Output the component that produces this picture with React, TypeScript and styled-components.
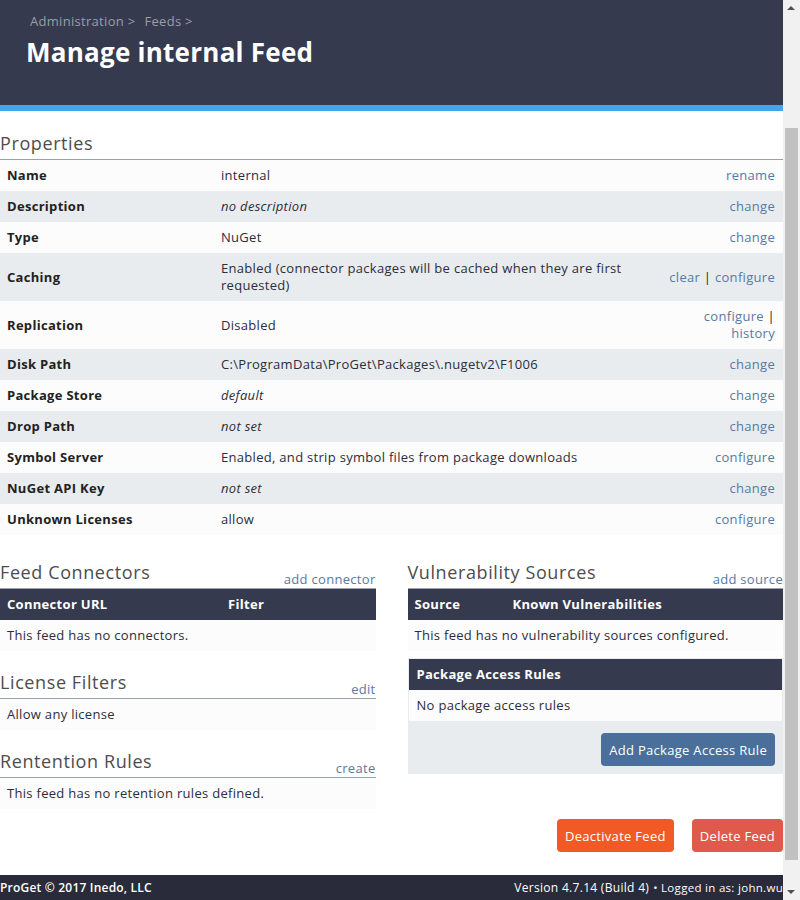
import React from 'react'
import styled, { createGlobalStyle } from 'styled-components'

const GlobalStyle = createGlobalStyle`
  body {
    margin: 0;
    background: #fff;
    color: #222;
    font-family: "Open Sans", "Liberation Sans", sans-serif;
    font-size: 13px;
    letter-spacing: 0.3px;
  }
  * {
    box-sizing: border-box;
  }
`

const Page = styled.div`
  width: calc(100% - 17px);
  min-height: 100vh;
  display: flex;
  flex-direction: column;
`

const Header = styled.header`
  height: 111px;
  padding: 13px 26px 0;
  background: #363a4e;
  border-bottom: 6px solid #42a6ef;
`

const Breadcrumb = styled.div`
  display: flex;
  gap: 9px;
  padding-left: 4px;
  font-size: 13px;
  line-height: 16px;
  color: #9a9eac;
`

const Title = styled.h1`
  margin: 7px 0 0;
  font-size: 26px;
  line-height: 32px;
  font-weight: 700;
  letter-spacing: 0.25px;
  color: #fff;
`

const Main = styled.main`
  flex: 1;
  padding: 20px 0 22px;
`

const SectionHeader = styled.div`
  display: flex;
  justify-content: space-between;
  align-items: flex-end;
  border-bottom: 1px solid #9aa2ac;
`

const SectionTitle = styled.h2`
  margin: 0;
  padding-bottom: 4px;
  font-size: 18px;
  line-height: 24px;
  font-weight: 400;
  letter-spacing: 0.6px;
  color: #4d4d4d;
`

const Link = styled.a`
  color: #5779a3;
  text-decoration: none;
  cursor: pointer;
`

const SmallLink = styled(Link)`
  font-size: 13px;
  line-height: 17px;
`

const PropTable = styled.table`
  width: 100%;
  border-collapse: collapse;
  table-layout: fixed;

  tr:nth-child(even) {
    background: #e8ecef;
  }
  tr:nth-child(odd) {
    background: #fcfcfc;
  }
`

const PropLabel = styled.th`
  width: 214px;
  padding: 7px;
  text-align: left;
  font-weight: 700;
  line-height: 17px;
  color: #222;
`

const PropValue = styled.td<{ $muted?: boolean }>`
  padding: 7px;
  line-height: 17px;
  color: #2c2c3a;
  font-style: ${(p) => (p.$muted ? 'italic' : 'normal')};
`

const PropActions = styled.td`
  width: 122px;
  padding: 7px 8px 7px 4px;
  line-height: 17px;
  text-align: right;
  color: #222;
`

const Columns = styled.div`
  display: grid;
  grid-template-columns: 1fr 1fr;
  gap: 32px;
  margin-top: 25px;
`

const Column = styled.div`
  display: flex;
  flex-direction: column;
`

const Section = styled.section`
  & + & {
    margin-top: 19px;
  }
`

const DataTable = styled.table`
  width: 100%;
  border-collapse: collapse;
`

const HeadCell = styled.th<{ $width?: number }>`
  width: ${(p) => (p.$width ? `${p.$width}px` : 'auto')};
  padding: 7px;
  background: #363a4e;
  color: #fff;
  font-weight: 700;
  text-align: left;
  line-height: 17px;
`

const EmptyCell = styled.td`
  padding: 7px;
  background: #fcfcfc;
  line-height: 17px;
  color: #2c2c3a;
`

const AccessBox = styled.div`
  margin-top: 7px;
  padding: 1px;
  background: #e8ecef;
`

const AccessHead = styled.div`
  padding: 7px 8px;
  background: #363a4e;
  color: #fff;
  font-weight: 700;
  line-height: 17px;
`

const AccessRow = styled.div`
  padding: 7px 8px;
  background: #fcfcfc;
  line-height: 17px;
  color: #2c2c3a;
`

const AccessFooter = styled.div`
  display: flex;
  justify-content: flex-end;
  padding: 12px 7px 7px;
`

const Button = styled.button<{ $tone: 'blue' | 'orange' | 'red' }>`
  height: 33px;
  padding: 0 8px;
  border: none;
  border-radius: 4px;
  font-family: inherit;
  font-size: 13px;
  letter-spacing: 0.3px;
  color: #fff;
  cursor: pointer;
  background: ${(p) =>
    p.$tone === 'blue' ? '#4a6f9b' : p.$tone === 'orange' ? '#f15a24' : '#e05a4b'};
`

const Actions = styled.div`
  display: flex;
  justify-content: flex-end;
  gap: 18px;
  margin-top: 10px;
`

const Footer = styled.footer`
  height: 25px;
  display: flex;
  align-items: center;
  justify-content: space-between;
  background: #292b3a;
  color: #fff;
  font-size: 12px;
  white-space: nowrap;
  overflow: hidden;
`

const Copyright = styled.span`
  font-weight: 600;
  letter-spacing: 0.2px;
`

const FooterRight = styled.div`
  display: flex;
  align-items: baseline;
  gap: 4px;
`

const Small = styled.span`
  font-size: 11.5px;
`

/* the window's scrollbar, as it shows in the screenshot */
const Scrollbar = styled.div`
  position: fixed;
  top: 0;
  right: 0;
  bottom: 0;
  width: 17px;
  background: #f1f1f1;
`

const Thumb = styled.div`
  position: absolute;
  top: 128px;
  bottom: 40px;
  left: 2px;
  right: 2px;
  background: #c1c1c1;
`

const Arrow = styled.div<{ $down?: boolean }>`
  position: absolute;
  left: 4px;
  ${(p) => (p.$down ? 'bottom: 6px;' : 'top: 6px;')}
  width: 0;
  height: 0;
  border-left: 4px solid transparent;
  border-right: 4px solid transparent;
  ${(p) => (p.$down ? 'border-top: 4px solid #505050;' : 'border-bottom: 4px solid #505050;')}
`

type Prop = {
  label: string
  value: string
  muted?: boolean
  actions: string[]
}

const properties: Prop[] = [
  { label: 'Name', value: 'internal', actions: ['rename'] },
  { label: 'Description', value: 'no description', muted: true, actions: ['change'] },
  { label: 'Type', value: 'NuGet', actions: ['change'] },
  {
    label: 'Caching',
    value: 'Enabled (connector packages will be cached when they are first requested)',
    actions: ['clear', 'configure'],
  },
  { label: 'Replication', value: 'Disabled', actions: ['configure', 'history'] },
  { label: 'Disk Path', value: 'C:\\ProgramData\\ProGet\\Packages\\.nugetv2\\F1006', actions: ['change'] },
  { label: 'Package Store', value: 'default', muted: true, actions: ['change'] },
  { label: 'Drop Path', value: 'not set', muted: true, actions: ['change'] },
  { label: 'Symbol Server', value: 'Enabled, and strip symbol files from package downloads', actions: ['configure'] },
  { label: 'NuGet API Key', value: 'not set', muted: true, actions: ['change'] },
  { label: 'Unknown Licenses', value: 'allow', actions: ['configure'] },
]

function ActionLinks({ actions }: { actions: string[] }) {
  return (
    <>
      {actions.map((a, i) => (
        <React.Fragment key={a}>
          {i > 0 && ' | '}
          <Link>{a}</Link>
        </React.Fragment>
      ))}
    </>
  )
}

function SectionHead({ title, action }: { title: string; action?: string }) {
  return (
    <SectionHeader>
      <SectionTitle>{title}</SectionTitle>
      {action && <SmallLink>{action}</SmallLink>}
    </SectionHeader>
  )
}

export default function App() {
  return (
    <>
      <GlobalStyle />
      <Page>
        <Header>
          <Breadcrumb>
            <span>Administration &gt;</span>
            <span>Feeds &gt;</span>
          </Breadcrumb>
          <Title>Manage internal Feed</Title>
        </Header>

        <Main>
          <SectionHead title="Properties" />
          <PropTable>
            <tbody>
              {properties.map((p) => (
                <tr key={p.label}>
                  <PropLabel>{p.label}</PropLabel>
                  <PropValue $muted={p.muted}>{p.value}</PropValue>
                  <PropActions>
                    <ActionLinks actions={p.actions} />
                  </PropActions>
                </tr>
              ))}
            </tbody>
          </PropTable>

          <Columns>
            <Column>
              <Section>
                <SectionHead title="Feed Connectors" action="add connector" />
                <DataTable>
                  <thead>
                    <tr>
                      <HeadCell $width={221}>Connector URL</HeadCell>
                      <HeadCell>Filter</HeadCell>
                    </tr>
                  </thead>
                  <tbody>
                    <tr>
                      <EmptyCell colSpan={2}>This feed has no connectors.</EmptyCell>
                    </tr>
                  </tbody>
                </DataTable>
              </Section>
              <Section>
                <SectionHead title="License Filters" action="edit" />
                <DataTable>
                  <tbody>
                    <tr>
                      <EmptyCell>Allow any license</EmptyCell>
                    </tr>
                  </tbody>
                </DataTable>
              </Section>
              <Section>
                <SectionHead title="Rentention Rules" action="create" />
                <DataTable>
                  <tbody>
                    <tr>
                      <EmptyCell>This feed has no retention rules defined.</EmptyCell>
                    </tr>
                  </tbody>
                </DataTable>
              </Section>
            </Column>

            <Column>
              <Section>
                <SectionHead title="Vulnerability Sources" action="add source" />
                <DataTable>
                  <thead>
                    <tr>
                      <HeadCell $width={98}>Source</HeadCell>
                      <HeadCell>Known Vulnerabilities</HeadCell>
                    </tr>
                  </thead>
                  <tbody>
                    <tr>
                      <EmptyCell colSpan={2}>This feed has no vulnerability sources configured.</EmptyCell>
                    </tr>
                  </tbody>
                </DataTable>
              </Section>
              <AccessBox>
                <AccessHead>Package Access Rules</AccessHead>
                <AccessRow>No package access rules</AccessRow>
                <AccessFooter>
                  <Button $tone="blue">Add Package Access Rule</Button>
                </AccessFooter>
              </AccessBox>
            </Column>
          </Columns>

          <Actions>
            <Button $tone="orange">Deactivate Feed</Button>
            <Button $tone="red">Delete Feed</Button>
          </Actions>
        </Main>

        <Footer>
          <Copyright>ProGet © 2017 Inedo, LLC</Copyright>
          <FooterRight>
            <span>Version 4.7.14 (Build 4)</span>
            <Small>• Logged in as: john.wu</Small>
          </FooterRight>
        </Footer>
      </Page>
      <Scrollbar>
        <Arrow />
        <Thumb />
        <Arrow $down />
      </Scrollbar>
    </>
  )
}
